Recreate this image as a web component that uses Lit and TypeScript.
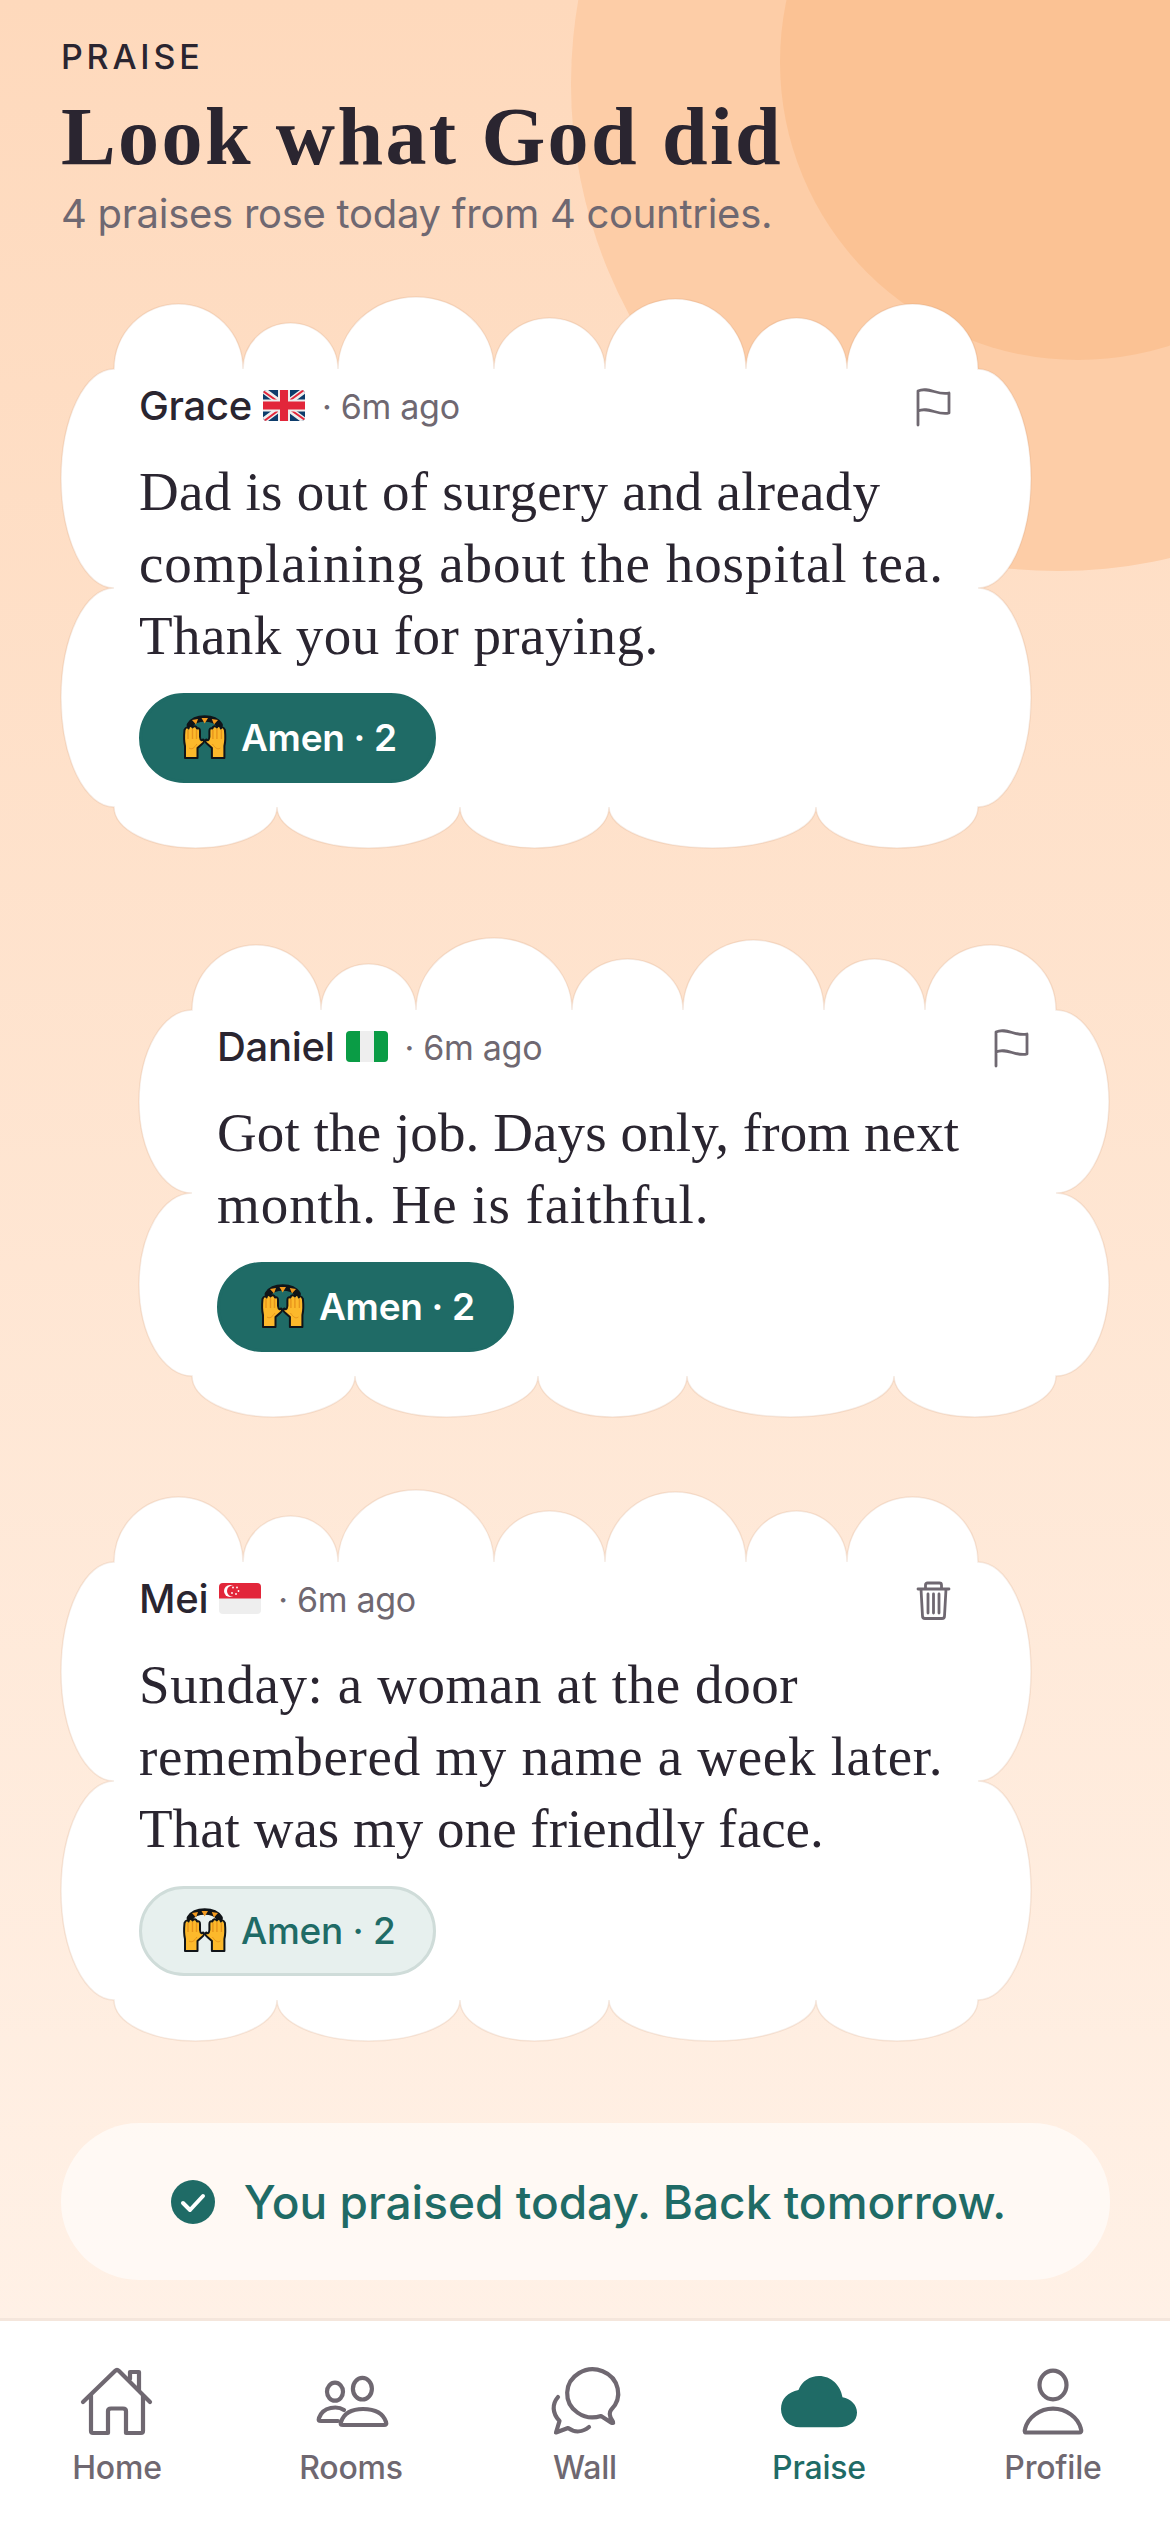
import { LitElement, html, css, svg } from "lit";
import { customElement } from "lit/decorators.js";

type Line = [string, number];
type Post = { name: string; flag: "gb" | "ng" | "sg"; lines: Line[]; cls: string; icon: "flag" | "trash"; on: boolean };

const POSTS: Post[] = [
  { name: "Grace", flag: "gb", cls: "first", icon: "flag", on: true,
    lines: [["Dad is out of surgery and already", 0.28], ["complaining about the hospital tea.", 0.96], ["Thank you for praying.", 0.43]] },
  { name: "Daniel", flag: "ng", cls: "second", icon: "flag", on: true,
    lines: [["Got the job. Days only, from next", 0.1], ["month. He is faithful.", 0.93]] },
  { name: "Mei", flag: "sg", cls: "third", icon: "trash", on: false,
    lines: [["Sunday: a woman at the door", 0.6], ["remembered my name a week later.", 0.7], ["That was my one friendly face.", 0.02]] },
];

function cloud(h: number) {
  const top = 72, bot = h - 41, mid = (top + bot) / 2;
  const tops: [number, number][] = [[182, 65], [277, 46], [433, 72], [544, 51], [685, 70], [786, 51], [917, 65]];
  const bots = [755, 548, 399, 216, 53];
  let x = 53;
  let d = `M53 ${top}`;
  for (const [nx, r] of tops) { d += ` A${(nx - x) / 2} ${r} 0 0 1 ${nx} ${top}`; x = nx; }
  const lobe = (bot - top) / 4;
  d += ` A53 ${lobe} 0 0 1 917 ${mid} A53 ${lobe} 0 0 1 917 ${bot}`;
  x = 917;
  for (const nx of bots) { d += ` A${(x - nx) / 2} 41 0 0 1 ${nx} ${bot}`; x = nx; }
  d += ` A53 ${lobe} 0 0 1 53 ${mid} A53 ${lobe} 0 0 1 53 ${top} Z`;
  return d;
}

const FLAGS = {
  gb: html`<svg class="flagimg" viewBox="0 0 42 31">
    <clipPath id="gbc"><rect width="42" height="31" rx="4"/></clipPath>
    <g clip-path="url(#gbc)">
      <rect width="42" height="31" fill="#0d3c6b"/>
      <path d="M0 0 42 31M42 0 0 31" stroke="#eeeeee" stroke-width="6"/>
      <path d="M0 1 17 13M42 30 25 18M41 0 26 11M1 31 16 20" stroke="#e2263a" stroke-width="2"/>
      <path d="M21 0V31M0 15.500H42" stroke="#eeeeee" stroke-width="12"/>
      <path d="M21 0V31M0 15.500H42" stroke="#e2263a" stroke-width="8"/>
    </g></svg>`,
  ng: html`<svg class="flagimg" viewBox="0 0 42 31">
    <clipPath id="ngc"><rect width="42" height="31" rx="4"/></clipPath>
    <g clip-path="url(#ngc)">
      <rect width="42" height="31" fill="#eeeeee"/>
      <rect width="14" height="31" fill="#0a9c45"/><rect x="28" width="14" height="31" fill="#0a9c45"/>
    </g></svg>`,
  sg: html`<svg class="flagimg" viewBox="0 0 42 31">
    <clipPath id="sgc"><rect width="42" height="31" rx="4"/></clipPath>
    <g clip-path="url(#sgc)">
      <rect width="42" height="31" fill="#eeeeee"/>
      <rect width="42" height="15.500" fill="#e2263a"/>
      <circle cx="11" cy="8" r="6" fill="#fff"/><circle cx="13.500" cy="8" r="5.500" fill="#e2263a"/>
      <g fill="#fff"><circle cx="14" cy="4.500" r=".9"/><circle cx="18" cy="4.500" r=".9"/><circle cx="19.500" cy="8" r=".9"/><circle cx="13" cy="10" r=".9"/><circle cx="17" cy="11" r=".9"/></g>
    </g></svg>`,
};

const HAND = svg`<path d="M2 43V31C1 27 1 20 1.500 15 3 11.500 5 12 5.500 13.500 6 10.500 8.500 10 9.500 12.500 11 10.500 13.500 11 14 13.500 16 12.500 17 14 17 16V22C17.500 26 19 25.500 20 24.500 22 25.500 21 27.500 19 29L14.500 33V43Z" fill="#fcb92b" stroke="#101418" stroke-width="2" stroke-linejoin="round"/><path d="M5 15V24M9.500 14V24M13.500 15V24" stroke="#e8951c" stroke-width="1.400" fill="none"/><path d="M6 33C9 35 11 33 14 29" stroke="#e8951c" stroke-width="1" fill="none"/>`;

const HANDS = html`<svg class="hands" viewBox="0 0 44 44">
  <path d="M7 10Q11 3.500 21.700 3.500 32.500 3.500 36.500 10" fill="none" stroke="#101418" stroke-width="6.500" stroke-linecap="round"/>
  <path d="M9 5 15 4 13 9.500ZM18.500 3 25 3 21.700 8.500ZM28.800 4 35 5 31 9.500Z" fill="#f29a1f"/>
  ${HAND}
  <g transform="matrix(-1 0 0 1 43.400 0)">${HAND}</g>
</svg>`;

const NAV = [
  { label: "Home", active: false, icon: svg`<path d="M6 42 38 11Q40 9 42 11L73 42M14 35V71Q14 73 16 73H31V51Q31 48.500 34 48.500H46Q49 48.500 49 51V73H64Q66 73 66 71V35M53 19V12H62V31"/>` },
  { label: "Rooms", active: false, icon: svg`<ellipse cx="24" cy="31.700" rx="8" ry="9"/><ellipse cx="51.400" cy="28.700" rx="9.500" ry="10.800"/><path d="M32 65H73Q76 65 75 62C72 53 63 49 52 49 41 49 33 53 30 62 29 65 30 65 32 65Z"/><path d="M33 50C27 46 12 46 8 58 7 61 8 61 10 61H27"/>` },
  { label: "Wall", active: false, icon: svg`<path d="M56 56A25.500 24 0 1 1 66 50Q63 54 67 60 70 64 66 62.500Z"/><path d="M13 37C7 44 7 53 14.500 61L11 72.500 23 68C30 73 38 72 44 67"/>` },
  { label: "Praise", active: true, icon: svg`<path class="fill" d="M21 67.300C10 67.300 2 59 2 49 2 39 9 32 19.500 30 23 21 31 16 40 16 52 16 61.500 25 63.500 37.300 72 39 78 45 78 52.500 78 61 71 67.300 59 67.300Z"/>` },
  { label: "Profile", active: false, icon: svg`<ellipse cx="40" cy="25" rx="13.500" ry="14.300"/><path d="M14 72.500H66Q69 72.500 68 69C65 57 53 48.700 40 48.700 27 48.700 15 57 12 69 11 72.500 12 72.500 14 72.500Z"/>` },
];

@customElement("app-root")
export class AppRoot extends LitElement {
  static styles = css`
    :host { display: block; width: 1170px; height: 2532px; }
    .page {
      position: relative; width: 1170px; height: 2532px; overflow: hidden;
      display: flex; flex-direction: column; box-sizing: border-box;
      background: linear-gradient(180deg, #fed9bc 0%, #fff3ea 100%);
      font-family: "Inter", sans-serif; color: #2a2530;
    }
    .disc { position: absolute; border-radius: 50%; }
    .disc.a { left: 571px; top: -403px; width: 974px; height: 974px; background: #fdcda7; }
    .disc.b { left: 780px; top: -236px; width: 596px; height: 596px; background: #fbc294; }
    main { position: relative; flex: 1; padding: 36px 0 0 61px; display: flex; flex-direction: column; align-items: flex-start; }
    .eyebrow { font-size: 34px; line-height: 42px; font-weight: 500; letter-spacing: 3.800px; }
    h1 { margin: 14px 0 0; font: 700 82px/90px "Liberation Serif", serif; letter-spacing: 2.400px; }
    .sub { margin: 7px 0 0; font-size: 40px; line-height: 50px; color: #6f6871; letter-spacing: -.27px; }
    .card { position: relative; width: 970px; box-sizing: border-box; padding: 84px 78px 65px; }
    .card svg.bg { position: absolute; left: 0; top: 0; overflow: visible; }
    .card.first { margin-top: 58px; }
    .card.second { margin-top: 90px; margin-left: 78px; }
    .card.third { margin-top: 73px; }
    .card > *:not(.bg) { position: relative; }
    .row { display: flex; align-items: center; height: 48px; }
    .name { font-size: 40px; font-weight: 550; letter-spacing: -.3px; }
    .flagimg { width: 42px; height: 31px; margin-left: 11px; }
    .ago { font-size: 34px; color: #6f6871; margin: 3px 0 0 17px; letter-spacing: -.3px; }
    .act { margin: 4px -1px 0 auto; width: 40px; height: 40px; fill: none; stroke: #6f6871; stroke-width: 2.800; stroke-linejoin: round; stroke-linecap: round; }
    .text { margin: 27px 0 0; font: 400 55px/72px "Liberation Serif", serif; }
    .text span { display: block; white-space: nowrap; }
    .amen { margin-top: 21px; height: 90px; min-width: 297px; box-sizing: border-box; display: inline-flex; align-items: center; gap: 14px;
      padding: 0 35px 2px 41px; border-radius: 45px; border: 3px solid #1f6b66; background: #1f6b66; color: #fff; font-size: 37px; font-weight: 600; letter-spacing: -.3px; }
    .amen.off { background: #e7f0ee; border-color: #cfdcd9; color: #1f6b66; font-weight: 500; }
    .hands { width: 44px; height: 44px; overflow: visible; }
    .banner { margin-top: 82px; width: 1049px; height: 157px; box-sizing: border-box; padding-left: 5px; border-radius: 78px; background: rgba(255,255,255,.6);
      display: flex; align-items: center; justify-content: center; gap: 28px; color: #1f6b66; font-size: 46px; font-weight: 500; }
    nav { position: relative; height: 214px; box-sizing: border-box; border-top: 3px solid #f4e6dc; background: #fff;
      display: grid; grid-template-columns: repeat(5, 234px); padding-top: 39px; align-content: start; }
    .tab { display: flex; flex-direction: column; align-items: center; color: #6f6871; font-size: 32px; font-weight: 500; line-height: 40px; letter-spacing: -.2px; }
    .tab svg { width: 80px; height: 80px; fill: none; stroke: currentColor; stroke-width: 4.200; stroke-linejoin: round; stroke-linecap: round; margin-bottom: 8px; }
    .tab.on { color: #1f6b66; }
    .tab .fill { fill: currentColor; stroke: none; }
  `;

  private card(p: Post) {
    const h = 84 + 48 + 27 + p.lines.length * 72 + 21 + 90 + 65;
    return html`<article class="card ${p.cls}">
      <svg class="bg" width="970" height=${h} viewBox="0 0 970 ${h}">
        <path d=${cloud(h)} fill="#fff" stroke="rgba(190,130,90,.15)" stroke-width="1.5"/>
      </svg>
      <div class="row">
        <span class="name">${p.name}</span>${FLAGS[p.flag]}<span class="ago">· 6m ago</span>
        ${p.icon === "flag"
          ? html`<svg class="act" viewBox="0 0 40 40"><path d="M4 38V4C14-1 24 9 35 6V26C24 29 14 19 4 24"/></svg>`
          : html`<svg class="act" viewBox="0 0 40 40"><path d="M4 9H35M11.500 9V5Q11.500 3 13.500 3H25.500Q27.500 3 27.500 5V9M7 9 8.500 36Q8.500 38.500 11 38.500H28Q30.500 38.500 30.500 36L32 9M14 14V33M19.500 14V33M25 14V33"/></svg>`}
      </div>
      <p class="text">${p.lines.map(([t, ls]) => html`<span style="letter-spacing:${ls}px">${t}</span>`)}</p>
      <div class="amen ${p.on ? "" : "off"}">${HANDS}<span>Amen · 2</span></div>
    </article>`;
  }

  render() {
    return html`<div class="page">
      <div class="disc a"></div><div class="disc b"></div>
      <main>
        <div class="eyebrow">PRAISE</div>
        <h1>Look what God did</h1>
        <p class="sub">4 praises rose today from 4 countries.</p>
        ${POSTS.map((p) => this.card(p))}
        <div class="banner">
          <svg width="46" height="46" viewBox="0 0 46 46"><circle cx="23" cy="23" r="22" fill="#1f6b66"/><path d="M13 24 20 31 33 17" fill="none" stroke="#fff" stroke-width="4" stroke-linecap="round" stroke-linejoin="round"/></svg>
          <span>You praised today. Back tomorrow.</span>
        </div>
      </main>
      <nav>
        ${NAV.map((n) => html`<div class="tab ${n.active ? "on" : ""}"><svg viewBox="0 0 80 80">${n.icon}</svg><span>${n.label}</span></div>`)}
      </nav>
    </div>`;
  }
}
